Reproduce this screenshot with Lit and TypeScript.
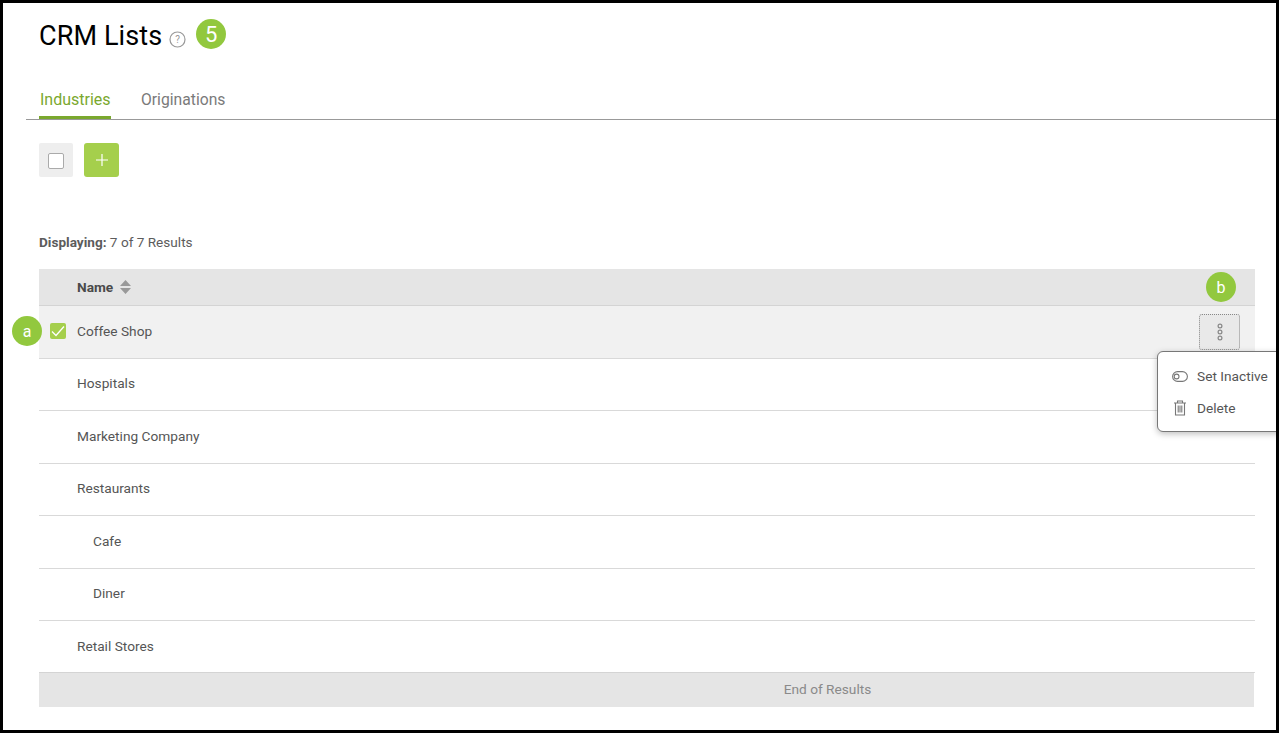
import { LitElement, html, css } from "lit";
import { customElement } from "lit/decorators.js";

const rows = [
  { name: "Hospitals", h: 52 },
  { name: "Marketing Company", h: 53 },
  { name: "Restaurants", h: 52 },
  { name: "Cafe", h: 53, child: true },
  { name: "Diner", h: 52, child: true },
  { name: "Retail Stores", h: 52 },
];

@customElement("app-root")
export class AppRoot extends LitElement {
  static styles = css`
    :host {
      display: block;
      box-sizing: border-box;
      width: 1279px;
      height: 733px;
      border: 3px solid #000;
      background: #fff;
      font-family: Roboto, "Liberation Sans", sans-serif;
      color: #4a4a4a;
      font-size: 13.7px;
      overflow: hidden;
      position: relative;
    }
    .page { padding: 0 0 0 23px; }
    .head { display: flex; align-items: center; height: 64px; padding-left: 13px; }
    h1 { margin: 2px 0 0; font-size: 27px; font-weight: 400; color: #000; line-height: 32px; letter-spacing: 0.1px; }
    .help { margin: 8px 0 0 7px; width: 17px; height: 17px; display: block; }
    .badge {
      width: 30px; height: 30px; border-radius: 50%; background: #92c83e;
      color: #fff; display: flex; align-items: center; justify-content: center;
      font-size: 16px; flex: none;
    }
    .head .badge { margin-left: 10px; margin-top: -2px; font-size: 22px; }
    .tabs { display: flex; height: 52px; border-bottom: 1px solid #999; padding-left: 13px; gap: 30px; }
    .tab { font-size: 15.7px; color: #7a7a7a; padding-top: 23px; line-height: 20px; box-sizing: border-box; height: 52px; }
    .tab.on { color: #7aa82e; border-bottom: 3px solid #7aa82e; width: 72px; font-size: 16px; padding-left: 1px; }
    .tools { display: flex; gap: 11px; padding: 23px 0 0 13px; height: 35px; }
    .tbtn { width: 34px; height: 34px; border-radius: 2px; background: #eee; display: flex; align-items: center; justify-content: center; }
    .tbtn.add { width: 35px; background: #a5cf4c; border-radius: 3px; }
    .box { width: 14px; height: 14px; border: 1px solid #aaa; border-radius: 2px; background: #fff; margin: 1px 1px 0 0; }
    .count { margin: 56px 0 0 13px; font-size: 13.6px; line-height: 16px; color: #5c5c5c; }
    .count b { font-weight: 700; }
    .table { margin: 19px 0 0 13px; width: 1216px; }
    .thead { height: 36px; background: #e5e5e5; border-bottom: 1px solid #d4d4d4; display: flex; align-items: center; padding-left: 38px; font-weight: 700; color: #4a4a4a; box-sizing: content-box; }
    .sort { margin-left: 7px; display: block; }
    .row { display: flex; align-items: center; padding: 0 0 3px 38px; border-bottom: 1px solid #d9d9d9; box-sizing: border-box; color: #555; }
    .row.child { padding-left: 54px; }
    .row.last { padding-bottom: 1px; }
    .row.sel { background: #f1f1f1; height: 53px; position: relative; padding-bottom: 2px; }
    .check { position: absolute; left: 11px; top: 17px; width: 16px; height: 16px; border-radius: 2px; background: #a5cf4c; display: flex; align-items: center; justify-content: center; }
    .more { position: absolute; right: 15px; top: 8px; width: 41px; height: 36px; border: 1px dotted #888; border-radius: 3px; background: #e9e9e9; display: flex; align-items: center; justify-content: center; box-sizing: border-box; }
    .foot { width: 1215px; height: 33px; background: #e5e5e5; border-top: 1px solid #d4d4d4; display: flex; align-items: center; justify-content: center; color: #8a8a8a; box-sizing: border-box; height: 35px; margin-top: -1px; padding-bottom: 2px; }
    .foot span { margin-left: 362px; }
    .badge.a { position: absolute; left: 9px; top: 313px; }
    .badge.b { position: absolute; left: 1203px; top: 269px; }
    .menu {
      position: absolute; left: 1154px; top: 348px; width: 130px; height: 81px; box-sizing: border-box;
      background: #fff; border: 1px solid #777; border-radius: 6px;
      box-shadow: 0 2px 6px rgba(0,0,0,.25); padding-top: 8px; color: #555;
    }
    .mi { display: flex; align-items: center; height: 32px; padding-left: 14px; gap: 9px; }
    .mi svg { display: block; flex: none; }
  `;

  private plain(r: { name: string; h: number; child?: boolean }, last: boolean) {
    return html`<div class="row ${r.child ? "child" : ""} ${last ? "last" : ""}" style="height:${r.h}px">${r.name}</div>`;
  }

  render() {
    return html`
      <div class="page">
        <div class="head">
          <h1>CRM Lists</h1>
          <svg class="help" viewBox="0 0 17 17" fill="none">
            <circle cx="8.5" cy="8.5" r="7.5" stroke="#999" stroke-width="1.2" />
            <text x="8.5" y="12" font-size="10" text-anchor="middle" fill="#999" font-family="Roboto">?</text>
          </svg>
          <div class="badge">5</div>
        </div>
        <div class="tabs">
          <div class="tab on">Industries</div>
          <div class="tab">Originations</div>
        </div>
        <div class="tools">
          <div class="tbtn"><div class="box"></div></div>
          <div class="tbtn add">
            <svg width="12" height="12" viewBox="0 0 12 12"><path d="M6 0v12M0 6h12" stroke="#fff" stroke-width="1.2" /></svg>
          </div>
        </div>
        <div class="count"><b>Displaying:</b> 7 of 7 Results</div>
        <div class="table">
          <div class="thead">
            Name
            <svg class="sort" width="11" height="14" viewBox="0 0 11 14"><path d="M5.5 0l5.5 6H0zM5.5 14L0 8h11z" fill="#999" /></svg>
          </div>
          <div class="row sel">
            <div class="check"><svg width="14" height="12" viewBox="0 0 14 12" fill="none"><path d="M1 6.5l4 4L13 1.5" stroke="#fff" stroke-width="1.3" /></svg></div>
            Coffee Shop
            <div class="more">
              <svg width="6" height="18" viewBox="0 0 6 18" fill="none" stroke="#888" stroke-width="1.2"><circle cx="3" cy="3" r="1.9"/><circle cx="3" cy="9" r="1.9"/><circle cx="3" cy="15" r="1.9"/></svg>
            </div>
          </div>
          ${rows.map((r, i) => this.plain(r, i === rows.length - 1))}
          <div class="foot"><span>End of Results</span></div>
        </div>
      </div>
      <div class="badge a">a</div>
      <div class="badge b">b</div>
      <div class="menu">
        <div class="mi">
          <svg width="16" height="11" viewBox="0 0 16 11" fill="none" stroke="#777" stroke-width="1.1"><rect x=".6" y=".6" width="14.8" height="9.8" rx="4.9"/><circle cx="4.6" cy="5.5" r="2.4"/></svg>
          Set Inactive
        </div>
        <div class="mi">
          <svg width="16" height="16" viewBox="0 0 16 16" fill="none" stroke="#777" stroke-width="1.1"><path d="M2 3h12M5.5 3V1h5v2M3.5 3v12h9V3M6.2 5.5v7M8 5.5v7M9.8 5.5v7"/></svg>
          Delete
        </div>
      </div>
    `;
  }
}
